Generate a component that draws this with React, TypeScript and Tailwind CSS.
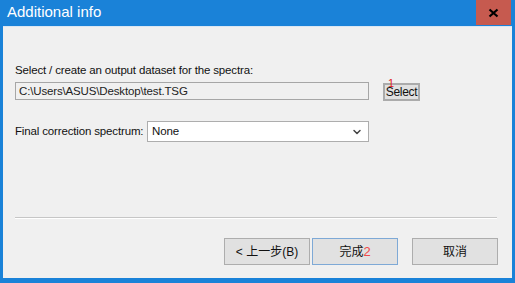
import { ChevronDown } from 'lucide-react';

const ui = { fontFamily: '"Liberation Sans", "Noto Sans CJK SC", sans-serif' };

function WinButton({ label, focused, extra }: { label: string; focused?: boolean; extra?: React.ReactNode }) {
  return (
    <button
      className={`w-[86px] h-[27px] flex items-center justify-center text-[12px] text-[#111] bg-[#e1e1e1] border ${
        focused ? 'border-[#7ea9d6]' : 'border-[#adadad]'
      }`}
    >
      {label}
      {extra}
    </button>
  );
}

export default function App() {
  return (
    <div className="w-[515px] h-[283px] bg-[#1a82d8] flex flex-col" style={ui}>
      {/* title bar */}
      <div className="h-[26px] flex items-start">
        <div className="flex-1 pl-[7px] pt-[3px] text-[15px] leading-[18px] text-white">Additional info</div>
        <div className="w-[35px] h-[25px] bg-[#c65a4f] flex items-center justify-center mr-[4px]">
          <svg width="11" height="10" viewBox="0 0 11 10">
            <path d="M1.5 1.5 L9.5 8.5 M9.5 1.5 L1.5 8.5" stroke="#000" strokeWidth="2.2" />
          </svg>
        </div>
      </div>

      {/* client area */}
      <div className="flex-1 mx-[3px] mb-[5px] bg-[#f0f0f0] border-t border-[#d9e6f3] pl-[12px] pt-[36px] flex flex-col text-[11.5px] tracking-[-0.15px] text-[#111] whitespace-nowrap">
        <div className="leading-[15px]">Select / create an output dataset for the spectra:</div>

        <div className="flex items-start mt-[4px]">
          <div className="w-[354px] h-[18px] border border-[#a6a6a6] bg-[#f0f0f0] pl-[3px] leading-[16px] text-[#222]">
            C:\Users\ASUS\Desktop\test.TSG
          </div>
          <div className="relative ml-[14px] mt-[1px]">
            <button className="w-[37px] h-[18px] border-2 border-[#ababab] bg-[#e1e1e1] text-[12px] leading-[13px] tracking-[-0.3px] text-[#111]">
              Select
            </button>
            <span className="absolute left-[5px] top-[-5px] text-[11px] leading-[11px] text-[#e0211b]">1</span>
          </div>
        </div>

        <div className="flex items-center mt-[20px]">
          <div className="w-[132px] leading-[15px]">Final correction spectrum:</div>
          <div className="w-[222px] h-[21px] border border-[#adadad] bg-white flex items-center pl-[4px] pr-[5px]">
            <span className="flex-1">None</span>
            <ChevronDown size={12} strokeWidth={3} className="text-[#444]" />
          </div>
        </div>

        <div className="w-[482px] mt-[75px] h-[2px] border-t border-[#c6c6c6] border-b border-b-white" />

        <div className="flex mt-[19px] ml-[209px] tracking-normal">
          <WinButton label="< 上一步(B)" />
          <div className="ml-[2px]">
            <WinButton label="完成" focused extra={<span className="text-[#f04a4a] text-[13px] leading-[13px]">2</span>} />
          </div>
          <div className="ml-[14px]">
            <WinButton label="取消" />
          </div>
        </div>
      </div>
    </div>
  );
}
